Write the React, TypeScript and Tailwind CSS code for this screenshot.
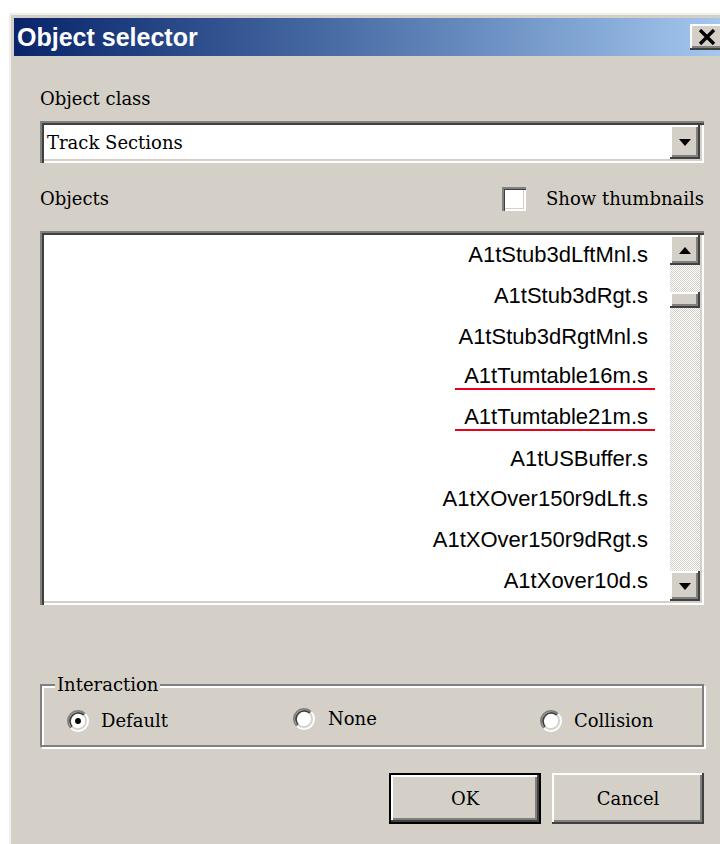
import React from 'react';

const serif = "font-['DejaVu_Serif',serif] text-[18px] text-black";
const sunken =
  'shadow-[inset_2px_2px_0_0_#808080,inset_4px_4px_0_0_#404040,inset_-2px_-2px_0_0_#ffffff,inset_-4px_-4px_0_0_#d4d0c8]';
const raised =
  'shadow-[inset_-2px_-2px_0_0_#404040,inset_2px_2px_0_0_#ffffff,inset_-4px_-4px_0_0_#808080,inset_4px_4px_0_0_#d4d0c8]';

const objects = [
  'A1tStub3dLftMnl.s',
  'A1tStub3dRgt.s',
  'A1tStub3dRgtMnl.s',
  'A1tTumtable16m.s',
  'A1tTumtable21m.s',
  'A1tUSBuffer.s',
  'A1tXOver150r9dLft.s',
  'A1tXOver150r9dRgt.s',
  'A1tXover10d.s',
];
const marked = [3, 4];

const Arrow: React.FC<{ up?: boolean }> = ({ up }) => (
  <svg width="12" height="7" viewBox="0 0 12 7">
    <polygon points={up ? '6,0 12,7 0,7' : '0,0 12,0 6,7'} fill="#000" />
  </svg>
);

const Radio: React.FC<{ checked?: boolean }> = ({ checked }) => (
  <svg width="22" height="22" viewBox="0 0 12 12" className="shrink-0">
    <circle cx="6" cy="6" r="5" fill="#fff" />
    <path d="M2.11 9.89 A5.5 5.5 0 0 1 9.89 2.11" stroke="#808080" strokeWidth="1" fill="none" />
    <path d="M9.89 2.11 A5.5 5.5 0 0 1 2.11 9.89" stroke="#ffffff" strokeWidth="1" fill="none" />
    <path d="M2.82 9.18 A4.5 4.5 0 0 1 9.18 2.82" stroke="#404040" strokeWidth="1" fill="none" />
    <path d="M9.18 2.82 A4.5 4.5 0 0 1 2.82 9.18" stroke="#d4d0c8" strokeWidth="1" fill="none" />
    {checked && <circle cx="6" cy="6" r="1.6" fill="#000" />}
  </svg>
);

const Button: React.FC<{ label: string; isDefault?: boolean }> = ({ label, isDefault }) => (
  <div className={`w-[152px] h-[51px] ${isDefault ? 'border-2 border-black' : ''}`}>
    <div className={`h-full flex items-center justify-center bg-[#d4d0c8] ${raised} ${serif}`}>{label}</div>
  </div>
);

export default function App() {
  return (
    <div className="w-[720px] h-[844px] overflow-hidden bg-white pl-[9px] pt-[13px]">
      <div className="w-[726px] h-[900px] border-l-2 border-t-2 border-[#f1efeb] bg-[#d4d0c8] p-[3px]">
        {/* caption */}
        <div className="flex h-[38px] items-center justify-between bg-linear-to-r from-[#0a246a] to-[#a6caf0] pl-[3px] pr-[8px]">
          <span className="font-['Liberation_Sans',sans-serif] font-bold text-[25px] leading-none text-white">
            Object selector
          </span>
          <div className={`w-[34px] h-[26px] flex items-center justify-center bg-[#d4d0c8] ${raised}`}>
            <svg width="18" height="16" viewBox="0 0 18 16">
              <path d="M2 1 L16 15 M16 1 L2 15" stroke="#000" strokeWidth="3.4" />
            </svg>
          </div>
        </div>

        <div className="pl-[26px] pr-[28px] flex flex-col">
          <div className={`mt-[32px] leading-[22px] ${serif}`}>Object class</div>

          <div className={`mt-[11px] h-[42px] flex bg-white p-[4px] ${sunken}`}>
            <div className={`flex-1 flex items-center pl-[3px] ${serif}`}>Track Sections</div>
            <div className={`w-[30px] flex items-center justify-center bg-[#d4d0c8] ${raised}`}>
              <Arrow />
            </div>
          </div>

          <div className="mt-[24px] h-[24px] flex items-center justify-between">
            <span className={`leading-[22px] ${serif}`}>Objects</span>
            <div className="flex items-center gap-[20px]">
              <div className="w-[24px] h-[24px] bg-white shadow-[inset_2px_2px_0_0_#808080,inset_3px_3px_0_0_#404040,inset_-2px_-2px_0_0_#ffffff,inset_-3px_-3px_0_0_#d4d0c8]" />
              <span className={`leading-[22px] ${serif}`}>Show thumbnails</span>
            </div>
          </div>

          {/* object list */}
          <div className={`mt-[20px] h-[374px] flex bg-white p-[4px] ${sunken}`}>
            <div className="flex-1 flex flex-col">
              {objects.map((name, i) => (
                <div key={name} className="h-[40.7px] flex items-center justify-end pr-[22px]">
                  <span
                    className={`inline-block font-['Liberation_Sans',sans-serif] text-[22px] leading-[24px] text-black ${
                      marked.includes(i) ? 'border-b-2 border-[#e8001c] pl-[9px] pr-[7px] -mr-[7px]' : ''
                    }`}
                  >
                    {name}
                  </span>
                </div>
              ))}
            </div>
            <div className="w-[30px] flex flex-col">
              <div className={`h-[30px] flex items-center justify-center bg-[#d4d0c8] ${raised}`}>
                <Arrow up />
              </div>
              <div className="flex-1 pt-[27px] bg-[repeating-conic-gradient(#d4d0c8_0%_25%,#ffffff_0%_50%)] bg-[length:2px_2px]">
                <div className={`h-[16px] bg-[#d4d0c8] ${raised}`} />
              </div>
              <div className={`h-[30px] flex items-center justify-center bg-[#d4d0c8] ${raised}`}>
                <Arrow />
              </div>
            </div>
          </div>

          {/* interaction group */}
          <fieldset className="mt-[69px] border-2 border-[#808080] shadow-[2px_2px_0_0_#ffffff,inset_2px_2px_0_0_#ffffff] pb-[12px]">
            <legend className={`ml-[13px] px-[2px] bg-[#d4d0c8] leading-[22px] ${serif}`}>Interaction</legend>
            <div className="mt-[13px] grid grid-cols-[226px_247px_auto] pl-[25px] h-[24px] items-center">
              <label className="flex items-center gap-[12px]">
                <Radio checked />
                <span className={`leading-[22px] ${serif}`}>Default</span>
              </label>
              <label className="flex items-center gap-[13px] -translate-y-[2px]">
                <Radio />
                <span className={`leading-[22px] ${serif}`}>None</span>
              </label>
              <label className="flex items-center gap-[12px]">
                <Radio />
                <span className={`leading-[22px] ${serif}`}>Collision</span>
              </label>
            </div>
          </fieldset>

          <div className="mt-[26px] flex justify-end gap-[11px]">
            <Button label="OK" isDefault />
            <Button label="Cancel" />
          </div>
        </div>
      </div>
    </div>
  );
}
